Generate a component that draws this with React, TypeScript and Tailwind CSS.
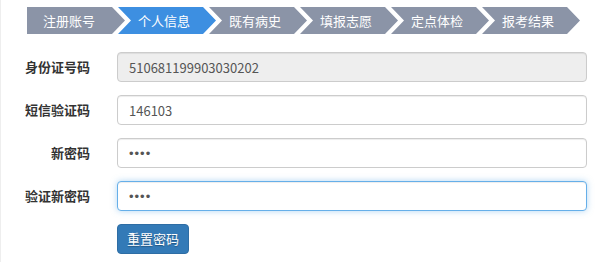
import React from "react";

const steps = ["注册账号", "个人信息", "既有病史", "填报志愿", "定点体检", "报考结果"];
const active = 1;

// 箭头形状
const firstClip =
  "[clip-path:polygon(0_0,calc(100%-13px)_0,100%_50%,calc(100%-13px)_100%,0_100%)]";
const restClip =
  "[clip-path:polygon(0_0,calc(100%-13px)_0,100%_50%,calc(100%-13px)_100%,0_100%,13px_50%)]";

const font = "font-['Microsoft_YaHei','Noto_Sans_CJK_SC',sans-serif]";

const StepBar = () => (
  <div className="flex pl-[26px] pt-[7px]">
    {steps.map((s, i) => (
      <div
        key={s}
        className={`flex h-[27px] w-[98px] items-center justify-center text-[13px] text-white ${
          i === 0 ? `${firstClip} pr-[14px]` : `${restClip} -ml-[7px] pl-[4px] pr-[10px]`
        } ${i === active ? "bg-[#3d8fe1]" : "bg-[#8b94a7]"}`}
      >
        {s}
      </div>
    ))}
  </div>
);

type RowProps = {
  label: string;
  value: string;
  disabled?: boolean;
  focused?: boolean;
  secret?: boolean;
};

const Row = ({ label, value, disabled, focused, secret }: RowProps) => (
  <div className="flex items-center">
    <label className="w-[89px] text-right text-[13px] font-bold text-[#333]">{label}</label>
    <input
      type="text"
      defaultValue={value}
      disabled={disabled}
      readOnly
      className={`ml-[27px] h-[30px] flex-1 rounded-[4px] border px-[11px] text-[13px] text-[#555] outline-none ${
        secret ? "font-['Liberation_Sans',sans-serif] tracking-[1px]" : ""
      } ${disabled ? "bg-[#eee]" : "bg-white"} ${
        focused
          ? "border-[#66afe9] shadow-[inset_0_1px_1px_rgba(0,0,0,0.075),0_0_6px_rgba(102,175,233,0.5)]"
          : "border-[#ccc] shadow-[inset_0_1px_1px_rgba(0,0,0,0.075)]"
      }`}
    />
  </div>
);

const App = () => {
  return (
    <div className={`h-[262px] w-[600px] overflow-hidden border-l border-[#eeeeee] bg-white ${font}`}>
      <StepBar />

      <div className="flex flex-col gap-[13px] pr-[13px] pt-[18px]">
        <Row label="身份证号码" value="510681199903030202" disabled />
        <Row label="短信验证码" value="146103" />
        <Row label="新密码" value="••••" secret />
        <Row label="验证新密码" value="••••" secret focused />
        <div className="flex">
          <button className="ml-[116px] h-[30px] w-[72px] rounded-[4px] border border-[#2e6da4] bg-[#337ab7] text-[13px] text-white [text-shadow:0_1px_1px_rgba(0,0,0,0.3)]">
            重置密码
          </button>
        </div>
      </div>
    </div>
  );
};

export default App;
